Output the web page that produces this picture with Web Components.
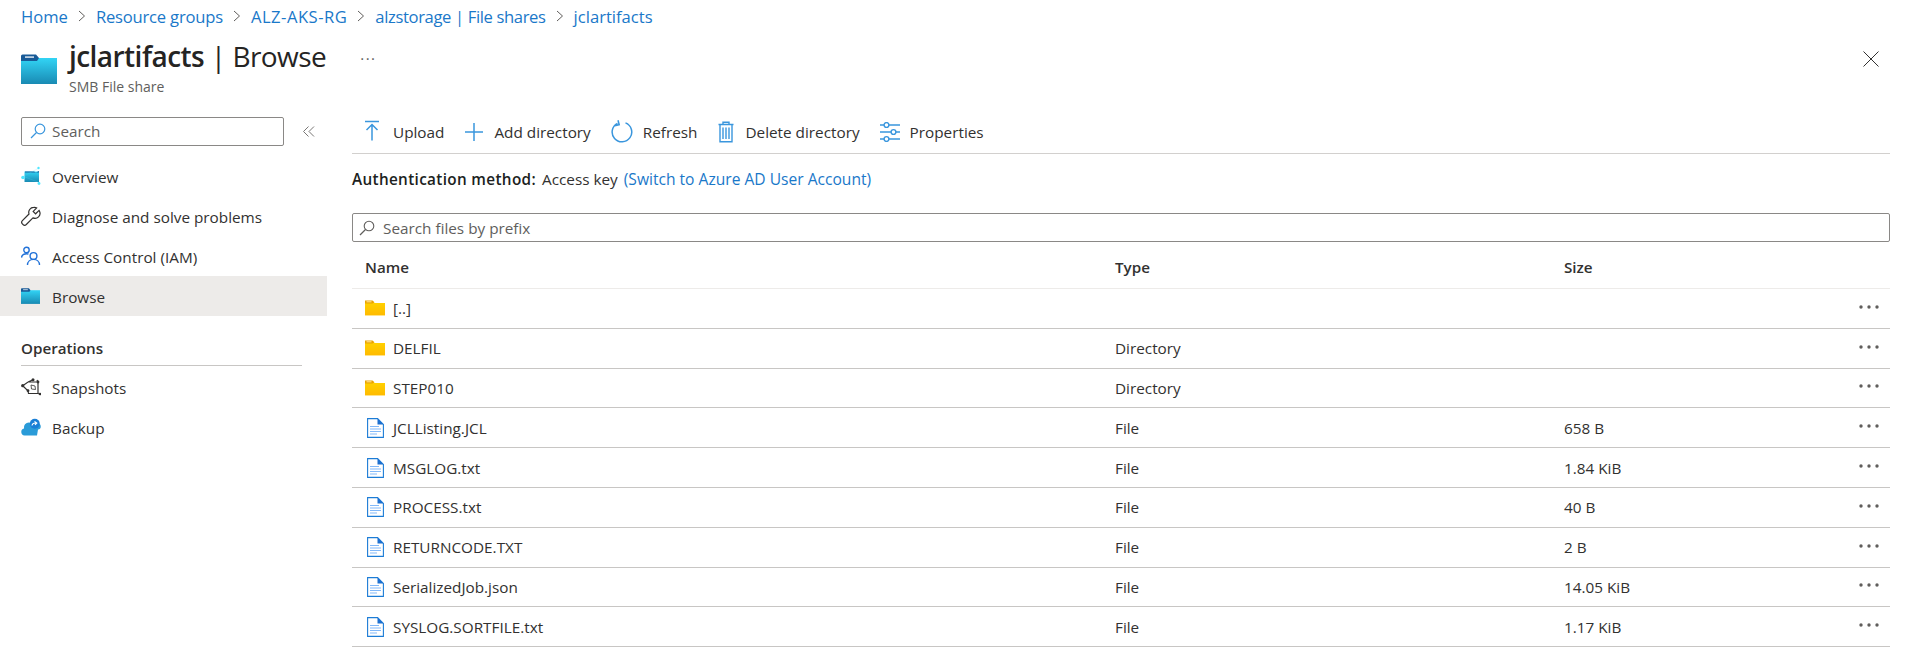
<!DOCTYPE html>
<html><head><meta charset="utf-8"><style>
html,body{margin:0;padding:0;background:#fff;overflow:hidden}
body{width:1913px;height:671px;font:15.3px "Open Sans","Noto Sans",sans-serif;color:#323130}
</style></head><body>
<az-page></az-page>
<script>
const folderBlue=(w,h,id)=>`<svg width="${w}" height="${h}" viewBox="0 0 36 30"><defs><linearGradient id="${id}" x1="0" y1="0" x2="0" y2="1"><stop offset="0" stop-color="#32d4f5"/><stop offset="1" stop-color="#198ab3"/></linearGradient></defs><path d="M0 4h36v26H0z" fill="url(#${id})"/><path d="M0 2a1.5 1.5 0 0 1 1.5-1.5H15l3 3.5L16 7H0z" fill="#185a97"/><rect x="4" y="2.3" width="9" height="1.6" fill="#fff" opacity=".8"/></svg>`;
class AzIcon extends HTMLElement{
 connectedCallback(){
  const n=this.getAttribute('name');
  const I={
  upload:'<svg width="20" height="24" viewBox="0 0 20 24"><path d="M3 1.500h14M10 4.500v16M4.500 10L10 4.500l5.500 5.500" fill="none" stroke="#3a96dd" stroke-width="1.500"/></svg>',
  plus:'<svg width="20" height="20" viewBox="0 0 20 20"><path d="M10 1v18M1 10h18" fill="none" stroke="#3a96dd" stroke-width="1.500"/></svg>',
  refresh:'<svg width="22" height="24" viewBox="0 0 22 24"><path d="M6.500 3.300A9.800 9.800 0 1 0 14.500 2.900M7 .3l1.200 4.400-4.400 1" fill="none" stroke="#3a96dd" stroke-width="1.500"/></svg>',
  trash:'<svg width="18" height="22" viewBox="0 0 18 22"><path d="M.5 3.500h15M5 3.500V1.200h6v2.300M2 3.500V20.800h12V3.500M5 6.500v11.500M8 6.500v11.500M11 6.500v11.500" transform="translate(1)" fill="none" stroke="#3a96dd" stroke-width="1.400"/></svg>',
  props:'<svg width="20" height="20" viewBox="0 0 20 20" fill="none" stroke="#3a96dd" stroke-width="1.400"><path d="M0 3h4M9 3h11M0 10h11M16 10h4M0 17h4M9 17h11"/><circle cx="6.500" cy="3" r="2.400"/><circle cx="13.500" cy="10" r="2.400"/><circle cx="6.500" cy="17" r="2.400"/></svg>',
  mag:'<svg width="16" height="16" viewBox="0 0 16 16"><circle cx="10" cy="6" r="4.800" fill="none" stroke="#3a96dd" stroke-width="1.200"/><path d="M6.500 9.500L1 15" stroke="#3a96dd" stroke-width="1.300"/></svg>',
  maggray:'<svg width="16" height="16" viewBox="0 0 16 16"><circle cx="10" cy="6" r="4.800" fill="none" stroke="#605e5c" stroke-width="1.100"/><path d="M6.500 9.500L1 15" stroke="#605e5c" stroke-width="1.200"/></svg>',
  title:folderBlue(36,30,'fb1'),
  browse:folderBlue(19,16,'fb2'),
  overview:'<svg width="20" height="20" viewBox="0 0 20 20"><defs><linearGradient id="ov" x1="0" y1="0" x2="0" y2="1"><stop offset="0" stop-color="#32d4f5"/><stop offset="1" stop-color="#198ab3"/></linearGradient></defs><path d="M3.500 5.500H18V16H3.500z" fill="url(#ov)"/><path d="M4 5.500h9l2 1H4zM18 5l-3 1.500h3z" fill="#185a97"/><g fill="#50e6ff"><path d="M2 10.500L18 2M18 16.500L4 11" stroke="#50e6ff" stroke-width=".4" opacity=".5"/><circle cx="2" cy="11.500" r="1.800"/><circle cx="17.500" cy="2" r="1.200"/><circle cx="18" cy="17.500" r="1.400"/></g></svg>',
  wrench:'<svg width="20" height="20" viewBox="0 0 20 20"><path d="M12.500 1.200a5 5 0 0 0-4.700 6.600L1.200 14.400a2.400 2.400 0 0 0 0 3.300l.6.600a2.400 2.400 0 0 0 3.300 0l6.600-6.600A5 5 0 0 0 18.300 5l-.4-.8-3.500 3.400-2.400-2.400 3.400-3.400-.9-.4a5 5 0 0 0-2-.2z" transform="translate(.2 .2)" fill="none" stroke="#323130" stroke-width="1.200"/></svg>',
  iam:'<svg width="20" height="20" viewBox="0 0 20 20" fill="none" stroke="#2272d8" stroke-width="1.400"><circle cx="5.500" cy="4" r="2.700"/><path d="M.5 11.500C1 9 3 7.700 5.500 7.700c.8 0 1.500.1 2 .4"/><circle cx="12.500" cy="10" r="3.400"/><path d="M6.500 19c0-3.400 2.600-5.600 6-5.600s6 2.200 6 5.600"/></svg>',
  snap:'<svg width="20" height="20" viewBox="0 0 20 20" fill="none" stroke="#323130" stroke-width="1.200"><path d="M1.700 8.700L7 5l10 0v11.500H7.500L7 13.700zM7 5l5-2.300M17 5l-1-2M17 16.500l2.700.5"/><path d="M10 8l4 1 .5 3.500-4-.5z" stroke-width=".8"/><g fill="#323130" stroke="none"><circle cx="1.700" cy="8.700" r="1.600"/><circle cx="12" cy="2.700" r="1.500"/><circle cx="17" cy="5" r="1.400"/><circle cx="19" cy="17" r="1.300"/><circle cx="7" cy="13.700" r="1.400"/></g></svg>',
  backup:'<svg width="20" height="20" viewBox="0 0 20 20"><path d="M3.500 18.500A3.500 3.500 0 0 1 3 11.600 5 5 0 0 1 8 5.500c1 0 2 .4 2.800 1h5.700a3 3 0 0 1 .5 6L16 18.500z" fill="#2a9bd8"/><circle cx="13.800" cy="6.800" r="5" fill="#1a7fd6"/><path d="M11 8.500c.3-2 1.500-2.700 4-2.500M13.500 4.500L15.800 6l-1.800 1.800" fill="none" stroke="#fff" stroke-width="1.100"/></svg>',
  folder:'<svg width="20" height="16" viewBox="0 0 20 16"><defs><linearGradient id="fy" x1="0" y1="0" x2="0" y2="1"><stop offset="0" stop-color="#ffd400"/><stop offset="1" stop-color="#ffb900"/></linearGradient></defs><path d="M0 1h7l2.500 2H20v13H0z" fill="url(#fy)"/><path d="M0 .5h7.500l2 1.700-2 1.300H0z" fill="#eaa300"/><rect x="1.500" y="1.300" width="5" height="1" fill="#ffe9a0"/><rect y="15" width="20" height="1" fill="#ffe38a"/></svg>',
  file:'<svg width="17" height="20" viewBox="0 0 17 20"><path d="M.6.600h10l5.800 5.800v13H.6z" fill="#fff" stroke="#1c7cd6" stroke-width="1.100"/><path d="M10.500.600l5.900 5.900h-5.900z" fill="#1c6fd0"/><path d="M3 8.500h9M3 11h11M3 13.500h11M3 16h7" stroke="#83b9f9" stroke-width="1.200"/></svg>',
  close:'<svg width="16" height="16" viewBox="0 0 16 16"><path d="M.5.500l15 15M15.500.500l-15 15" stroke="#323130" stroke-width="1"/></svg>',
  collapse:'<svg width="12" height="11" viewBox="0 0 12 11" fill="none" stroke="#797775" stroke-width="1"><path d="M5.500.500l-5 5 5 5M11 .500l-5 5 5 5"/></svg>',
  more:'<svg width="20" height="4" viewBox="0 0 20 4" fill="#605e5c"><circle cx="2" cy="2" r="1.700"/><circle cx="10" cy="2" r="1.700"/><circle cx="18" cy="2" r="1.700"/></svg>',
  };
  this.attachShadow({mode:'open'}).innerHTML=`<style>:host{display:inline-flex;align-items:center;justify-content:center;flex:none}svg{display:block}</style>${I[n]||''}`;
 }
}
customElements.define('az-icon',AzIcon);

class AzCrumbs extends HTMLElement{
 constructor(){super();const r=this.attachShadow({mode:'open'});
 const items=[['Home',0],['Resource groups',-.2],['ALZ-AKS-RG',.5],['alzstorage | File shares',-.36],['jclartifacts',0]];
 r.innerHTML=`<style>:host{display:flex;align-items:center;height:32px;padding-left:21px;font-size:16.6px}
 a{color:#1a78c9;white-space:nowrap}svg{margin:0 10px 0 10px;display:block}</style>`+items.map(t=>`<a style="letter-spacing:${t[1]}px">${t[0]}</a>`).join('<svg width="8" height="12" viewBox="0 0 8 12"><path d="M1 1l5.500 5L1 11" fill="none" stroke="#605e5c" stroke-width="1"/></svg>');}
}
customElements.define('az-crumbs',AzCrumbs);

class AzHeader extends HTMLElement{
 constructor(){super();this.attachShadow({mode:'open'}).innerHTML=`<style>
 :host{display:flex;height:68px;padding-left:21px;padding-right:34px;align-items:flex-start}
 .ic{margin-top:22px;margin-right:12px;display:flex}
 h1{margin:0;font-size:28px;font-weight:400;line-height:38px;color:#252423;white-space:nowrap;letter-spacing:-.55px;margin-top:5px}
 h1 b{font-weight:600}
 .sub{font-size:14px;color:#605e5c;line-height:18px;margin-top:3px}
 .dots{margin-left:34px;margin-top:16px;font-size:15px;color:#605e5c;line-height:20px;letter-spacing:1.5px}
 .x{margin-left:auto;margin-top:19px;display:flex}
 </style><div class="ic"><az-icon name="title"></az-icon></div><div><h1><b>jclartifacts</b> | Browse</h1><div class="sub">SMB File share</div></div><div class="dots">···</div><div class="x"><az-icon name="close"></az-icon></div>`;}
}
customElements.define('az-header',AzHeader);

class AzNavItem extends HTMLElement{
 constructor(){super();this.attachShadow({mode:'open'}).innerHTML=`<style>
 :host{display:flex;align-items:center;height:40px;padding-left:21px;font-size:15.3px;color:#323130;white-space:nowrap}
 :host([active]){background:#edebe9}
 .i{width:20px;height:20px;display:flex;align-items:center;margin-right:11px}
 .t{padding-top:2px}
 </style><div class="i"><slot name="i"></slot></div><span class="t"><slot></slot></span>`;}
}
customElements.define('az-nav-item',AzNavItem);

class AzSidebar extends HTMLElement{
 constructor(){super();this.attachShadow({mode:'open'}).innerHTML=`<style>
 :host{display:block;width:327px;flex:none;padding-top:16px}
 .top{display:flex;align-items:center;height:30px;padding-left:21px;margin-bottom:10px}
 .box{width:263px;height:29px;box-sizing:border-box;border:1px solid #8a8886;border-radius:2px;display:flex;align-items:center;padding-left:8px;color:#605e5c;gap:6px;font-size:15.3px}
 .col{margin-left:19px;display:flex}
 .sec{font-weight:600;font-size:15.2px;color:#323130;margin:22px 25px 1px 21px;line-height:20px;border-bottom:1px solid #c8c6c4;height:27px}
 </style><div class="top"><div class="box"><az-icon name="mag"></az-icon>Search</div><div class="col"><az-icon name="collapse"></az-icon></div></div>
 <az-nav-item><az-icon slot="i" name="overview"></az-icon>Overview</az-nav-item>
 <az-nav-item><az-icon slot="i" name="wrench"></az-icon>Diagnose and solve problems</az-nav-item>
 <az-nav-item><az-icon slot="i" name="iam"></az-icon>Access Control (IAM)</az-nav-item>
 <az-nav-item active><az-icon slot="i" name="browse"></az-icon>Browse</az-nav-item>
 <div class="sec">Operations</div>
 <az-nav-item><az-icon slot="i" name="snap"></az-icon>Snapshots</az-nav-item>
 <az-nav-item><az-icon slot="i" name="backup"></az-icon>Backup</az-nav-item>`;}
}
customElements.define('az-sidebar',AzSidebar);

class AzTool extends HTMLElement{
 constructor(){super();this.attachShadow({mode:'open'}).innerHTML=`<style>:host{display:flex;align-items:center;gap:10px;font-size:15.3px;color:#323130;white-space:nowrap}:host(:first-child){gap:11px}</style><slot></slot>`;}
}
customElements.define('az-tool',AzTool);

class AzRow extends HTMLElement{
 constructor(){super();
 const name=this.getAttribute('name'),type=this.getAttribute('type')||'',size=this.getAttribute('size')||'',ic=this.getAttribute('icon');
 this.attachShadow({mode:'open'}).innerHTML=`<style>
 :host{display:grid;grid-template-columns:750px 449px 1fr 31px;align-items:center;height:39.8px;box-sizing:border-box;border-bottom:1px solid #c8c6c4;font-size:15.3px;color:#323130;white-space:nowrap;padding-left:13px}
 .n{display:flex;align-items:center}
 .i{width:28px;display:flex;justify-content:flex-start;box-sizing:border-box}
 .m{display:flex;justify-content:flex-start;margin-top:-3px}
 </style><div class="n"><div class="i" style="padding-left:${ic=='file'?'2px':'0'}"><az-icon name="${ic}"></az-icon></div>${name}</div><div>${type}</div><div>${size}</div><div class="m"><az-icon name="more"></az-icon></div>`;}
}
customElements.define('az-row',AzRow);

class AzMain extends HTMLElement{
 constructor(){super();this.attachShadow({mode:'open'}).innerHTML=`<style>
 :host{display:block;flex:1;padding:0 23px 0 25px;min-width:0}
 .tb{height:41px;display:flex;align-items:center;border-bottom:1px solid #d2d0ce;padding-left:10px;gap:20px;margin-top:11px;padding-bottom:1px}
 .auth{height:40px;margin-top:5px;display:flex;align-items:center;font-size:15.3px;color:#323130;white-space:nowrap}
 .auth b{font-weight:600;color:#201f1e;letter-spacing:.34px;margin-right:6px}.auth a{color:#1a78c9;margin-left:6px;font-size:15.6px}
 .s{margin-top:14px;height:29px;box-sizing:border-box;border:1px solid #8a8886;border-radius:2px;display:flex;align-items:center;gap:8px;padding-left:6px;color:#605e5c;font-size:15.3px}
 .h{display:grid;grid-template-columns:750px 449px 1fr;align-items:center;height:47px;box-sizing:border-box;border-bottom:1px solid #edebe9;font-weight:600;font-size:15.2px;padding-left:13px;padding-top:3px;color:#323130}
 </style>
 <div class="tb">
 <az-tool><az-icon name="upload"></az-icon>Upload</az-tool>
 <az-tool><az-icon name="plus"></az-icon>Add directory</az-tool>
 <az-tool><az-icon name="refresh"></az-icon>Refresh</az-tool>
 <az-tool><az-icon name="trash"></az-icon>Delete directory</az-tool>
 <az-tool><az-icon name="props"></az-icon>Properties</az-tool>
 </div>
 <div class="auth"><b>Authentication method:</b><span>Access key</span><a>(Switch to Azure AD User Account)</a></div>
 <div class="s"><az-icon name="maggray"></az-icon>Search files by prefix</div>
 <div class="h"><div>Name</div><div>Type</div><div>Size</div></div>
 <az-row icon="folder" name="[..]"></az-row>
 <az-row icon="folder" name="DELFIL" type="Directory"></az-row>
 <az-row icon="folder" name="STEP010" type="Directory"></az-row>
 <az-row icon="file" name="JCLListing.JCL" type="File" size="658 B"></az-row>
 <az-row icon="file" name="MSGLOG.txt" type="File" size="1.84 KiB"></az-row>
 <az-row icon="file" name="PROCESS.txt" type="File" size="40 B"></az-row>
 <az-row icon="file" name="RETURNCODE.TXT" type="File" size="2 B"></az-row>
 <az-row icon="file" name="SerializedJob.json" type="File" size="14.05 KiB"></az-row>
 <az-row icon="file" name="SYSLOG.SORTFILE.txt" type="File" size="1.17 KiB"></az-row>`;}
}
customElements.define('az-main',AzMain);

class AzPage extends HTMLElement{
 constructor(){super();this.attachShadow({mode:'open'}).innerHTML=`<style>:host{display:block;width:1913px;height:671px}
 .b{display:flex}</style><az-crumbs></az-crumbs><az-header></az-header><div class="b"><az-sidebar></az-sidebar><az-main></az-main></div>`;}
}
customElements.define('az-page',AzPage);
</script></body></html>
